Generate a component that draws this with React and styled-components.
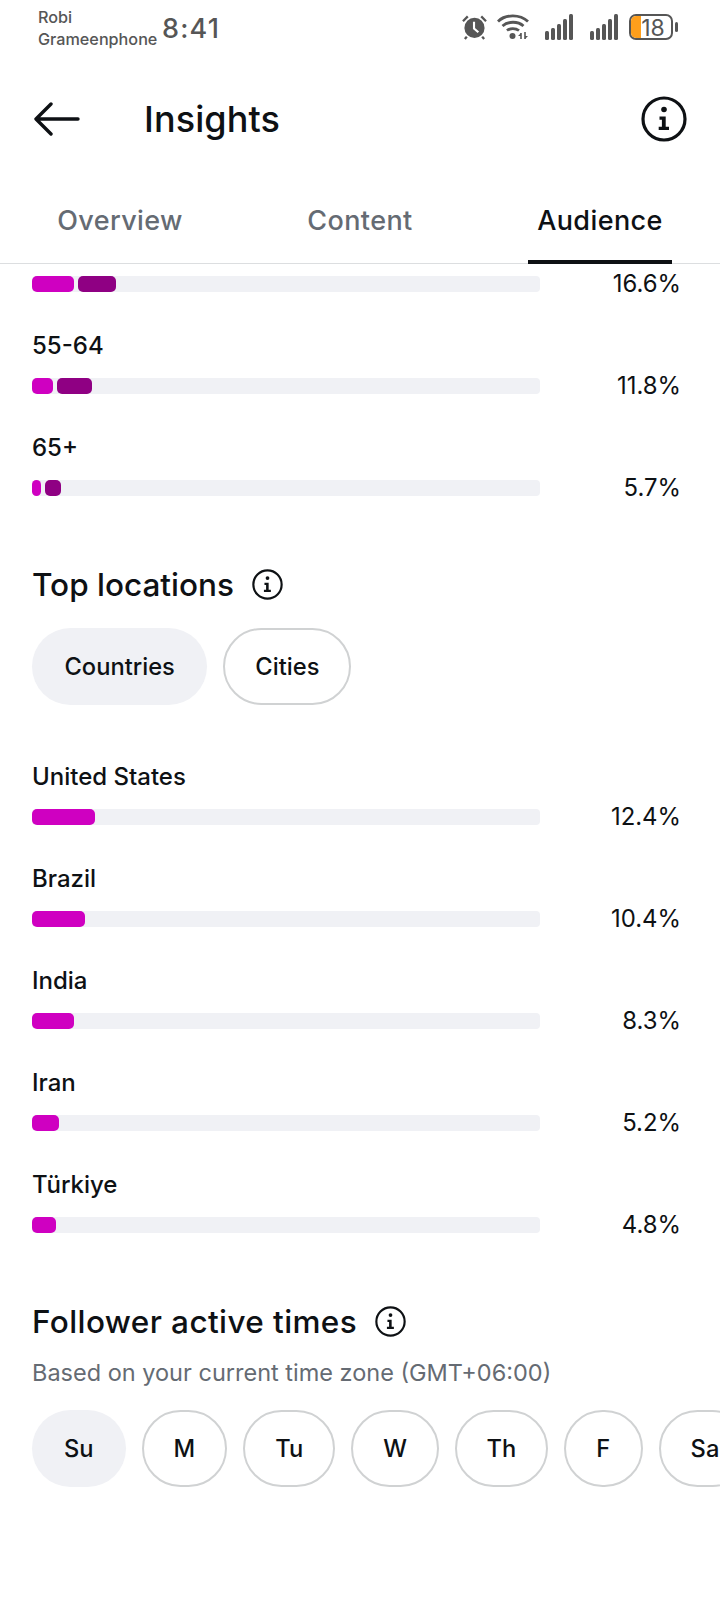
import styled, { createGlobalStyle } from "styled-components";

const GlobalStyle = createGlobalStyle`
html, body {
  margin:0;
  padding:0;
  background:#fff;
}
body {
  font-family:Inter, "Liberation Sans", sans-serif;
  color:#0e1114;
}
`
const Page = styled.div`
width:720px;
height:1600px;
overflow:hidden;
background:#fff;
`
const StatusBar = styled.div`
height:56px;
display:flex;
align-items:center;
padding-left:38px;
padding-right:41px;
color:#565656;
`
const Carrier = styled.div`
font-size:16.2px;
font-weight:500;
line-height:22px;
width:124px;
white-space:nowrap;
`
const Clock = styled.div`
font-size:27px;
font-weight:500;
letter-spacing:1.2px;
`
const StatusIcons = styled.div`
margin-left:auto;
margin-top:-2px;
display:flex;
align-items:center;
`
const Header = styled.div`
height:126px;
display:flex;
align-items:center;
padding-left:34px;
padding-right:33px;
`
const Title = styled.h1`
margin:0 0 0 64px;
font-size:36px;
font-weight:500;
letter-spacing:0.1px;
`
const HeaderInfo = styled.div`
margin-left:auto;
display:flex;
`
const Tabs = styled.div`
height:81px;
display:grid;
grid-template-columns:repeat(3, 1fr);
border-bottom:1px solid #dcdee0;
`
const Tab = styled.div`
position:relative;
display:flex;
justify-content:center;
padding-top:22px;
font-size:27px;
font-weight:500;
letter-spacing:0.4px;
color:${p => p.$active ? "#0e1114" : "#656b73"};
&::after {
  content:"";
  display:${p => p.$active ? "block" : "none"};
  position:absolute;
  left:48px;
  right:48px;
  bottom:-1px;
  height:4px;
  background:#0e1114;
}
`
const Content = styled.div`
padding:12px 39px 0 32px;
`
const Row = styled.div`
height:102px;
`
const FirstRow = styled.div`
height:40px;
`
const Label = styled.div`
height:62px;
padding-top:8px;
box-sizing:border-box;
font-size:24px;
line-height:44px;
font-weight:500;
color:#0e1114;
`
const BarLine = styled.div`
display:flex;
align-items:center;
justify-content:space-between;
height:16px;
`
const Track = styled.div`
width:508px;
height:16px;
display:flex;
gap:4px;
background:#f0f1f5;
border-radius:4px;
`
const Fill = styled.div`
height:16px;
border-radius:5px;
background:${p => p.$dark ? "#8f0083" : "#cf00c1"};
`
const Value = styled.div`
font-size:23.9px;
font-weight:400;
padding-bottom:2px;
color:#0e1114;
`
const SectionHead = styled.div`
display:flex;
align-items:center;
gap:18px;
font-size:31.5px;
font-weight:500;
letter-spacing:${p => p.$track}px;
`
const Locations = styled.div`
margin-top:45px;
`
const Pills = styled.div`
display:flex;
gap:16px;
margin-top:${p => p.$top}px;
white-space:nowrap;
`
const Pill = styled.div`
height:77px;
box-sizing:border-box;
display:flex;
align-items:center;
flex:none;
padding:0 ${p => p.$pad}px;
border-radius:39px;
font-size:23.7px;
font-weight:500;
color:#0e1114;
background:${p => p.$active ? "#f0f1f5" : "#fff"};
border:${p => p.$active ? "none" : "2px solid #d0d2d3"};
`
const LocationRows = styled.div`
margin-top:42px;
`
const ActiveTimes = styled.div`
margin-top:45px;
`
const Sub = styled.div`
margin-top:17px;
font-size:23.5px;
color:#656b73;
`

const Info = ({ size }) => (
  <svg width={size} height={size} viewBox="0 0 46 46" fill="none">
    <circle cx="23" cy="23" r="21" stroke="#0e1114" strokeWidth="3.2" />
    <circle cx="23" cy="13.5" r="2.8" fill="#0e1114" />
    <path d="M18.5 20.5h6.2v10.3h3.3v3.2H17.7v-3.2h3.2v-7.1h-2.4z" fill="#0e1114" />
  </svg>
)

const Signal = ({ right }) => (
  <svg width="28" height="26" viewBox="0 0 28 26" style={{ marginRight: right }} fill="#565656">
    <rect x="0" y="17" width="4" height="9" rx="1.5" />
    <rect x="6" y="14" width="4" height="12" rx="1.5" />
    <rect x="12" y="10" width="4" height="16" rx="1.5" />
    <rect x="18" y="5" width="4" height="21" rx="1.5" />
    <rect x="24" y="0" width="4" height="26" rx="1.5" />
  </svg>
)

const StatusGlyphs = () => (
  <StatusIcons>
    <svg width="25" height="26" viewBox="0 0 26 26" style={{ marginRight: 10 }}>
      <circle cx="13" cy="14" r="10.5" fill="#565656" />
      <path d="M1 7l5-5M25 7l-5-5M5 23l-2 2.500M21 23l2 2.500" stroke="#565656" strokeWidth="2.4" />
      <path d="M12.500 7.500v7l4.500 4" stroke="#fff" strokeWidth="2.200" fill="none" />
    </svg>
    <svg width="32" height="26" viewBox="0 0 32 26" style={{ marginRight: 16 }} fill="none">
      <path d="M1 7.500C8.500 0 23 0 31 7.500" stroke="#565656" strokeWidth="2.800" />
      <path d="M5.500 12C11 7 21 7 26.500 12" stroke="#565656" strokeWidth="2.800" />
      <path d="M10 16.500c3-2.600 8.500-2.600 12 0" stroke="#565656" strokeWidth="2.800" />
      <circle cx="15.500" cy="22" r="3" fill="#565656" />
      <path d="M24 19v6M28 18v7" stroke="#565656" strokeWidth="1.600" />
      <path d="M24 19l-3 3h3zM28 25l3-3h-3z" fill="#565656" />
    </svg>
    <Signal right={17} />
    <Signal right={11} />
    <svg width="50" height="26" viewBox="0 0 50 26" fill="none">
      <rect x="1" y="1" width="42" height="24" rx="6" stroke="#565656" strokeWidth="2" />
      <path d="M7 2h5v22H7a5 5 0 0 1-5-5V7a5 5 0 0 1 5-5z" fill="#ff9f1c" />
      <rect x="46" y="8" width="3" height="10" rx="1.500" fill="#565656" />
      <text x="24" y="21.500" textAnchor="middle" fontSize="23" fontFamily="Inter, sans-serif" fill="#565656">18</text>
    </svg>
  </StatusIcons>
)

const BarRow = ({ label, value, fills }) => (
  <Row>
    <Label>{label}</Label>
    <BarLine>
      <Track>
        {fills.map((w, i) => <Fill key={i} $dark={i === 1} style={{ width: w }} />)}
      </Track>
      <Value>{value}</Value>
    </BarLine>
  </Row>
)

const locations = [
  ["United States", "12.4%", 63],
  ["Brazil", "10.4%", 53],
  ["India", "8.3%", 42],
  ["Iran", "5.2%", 27],
  ["Türkiye", "4.8%", 24],
]

const days = [["Su", 32], ["M", 30], ["Tu", 30], ["W", 30], ["Th", 29.5], ["F", 30.5], ["Sa", 30]]

const App = () => (
  <Page>
    <GlobalStyle />
    <StatusBar>
      <Carrier>Robi<br />Grameenphone</Carrier>
      <Clock>8:41</Clock>
      <StatusGlyphs />
    </StatusBar>
    <Header>
      <svg width="46" height="34" viewBox="0 0 46 34" fill="none">
        <path d="M44 17H3M17 2L2 17l15 15" stroke="#0e1114" strokeWidth="3.4" strokeLinecap="round" strokeLinejoin="round" />
      </svg>
      <Title>Insights</Title>
      <HeaderInfo><Info size={46} /></HeaderInfo>
    </Header>
    <Tabs>
      <Tab>Overview</Tab>
      <Tab>Content</Tab>
      <Tab $active>Audience</Tab>
    </Tabs>
    <Content>
      <FirstRow>
        <BarLine>
          <Track>
            <Fill style={{ width: 42 }} />
            <Fill $dark style={{ width: 38 }} />
          </Track>
          <Value>16.6%</Value>
        </BarLine>
      </FirstRow>
      <BarRow label="55-64" value="11.8%" fills={[21, 35]} />
      <BarRow label="65+" value="5.7%" fills={[9, 16]} />
      <Locations>
        <SectionHead $track={0}>Top locations <Info size={31} /></SectionHead>
        <Pills $top={24}>
          <Pill $active $pad={32.5}>Countries</Pill>
          <Pill $pad={30}>Cities</Pill>
        </Pills>
        <LocationRows>
          {locations.map(([name, value, w]) => (
            <BarRow key={name} label={name} value={value} fills={[w]} />
          ))}
        </LocationRows>
      </Locations>
      <ActiveTimes>
        <SectionHead $track={0.4}>Follower active times <Info size={31} /></SectionHead>
        <Sub>Based on your current time zone (GMT+06:00)</Sub>
        <Pills $top={23}>
          {days.map(([d, pad], i) => <Pill key={d} $active={i === 0} $pad={pad}>{d}</Pill>)}
        </Pills>
      </ActiveTimes>
    </Content>
  </Page>
);

export default App;
